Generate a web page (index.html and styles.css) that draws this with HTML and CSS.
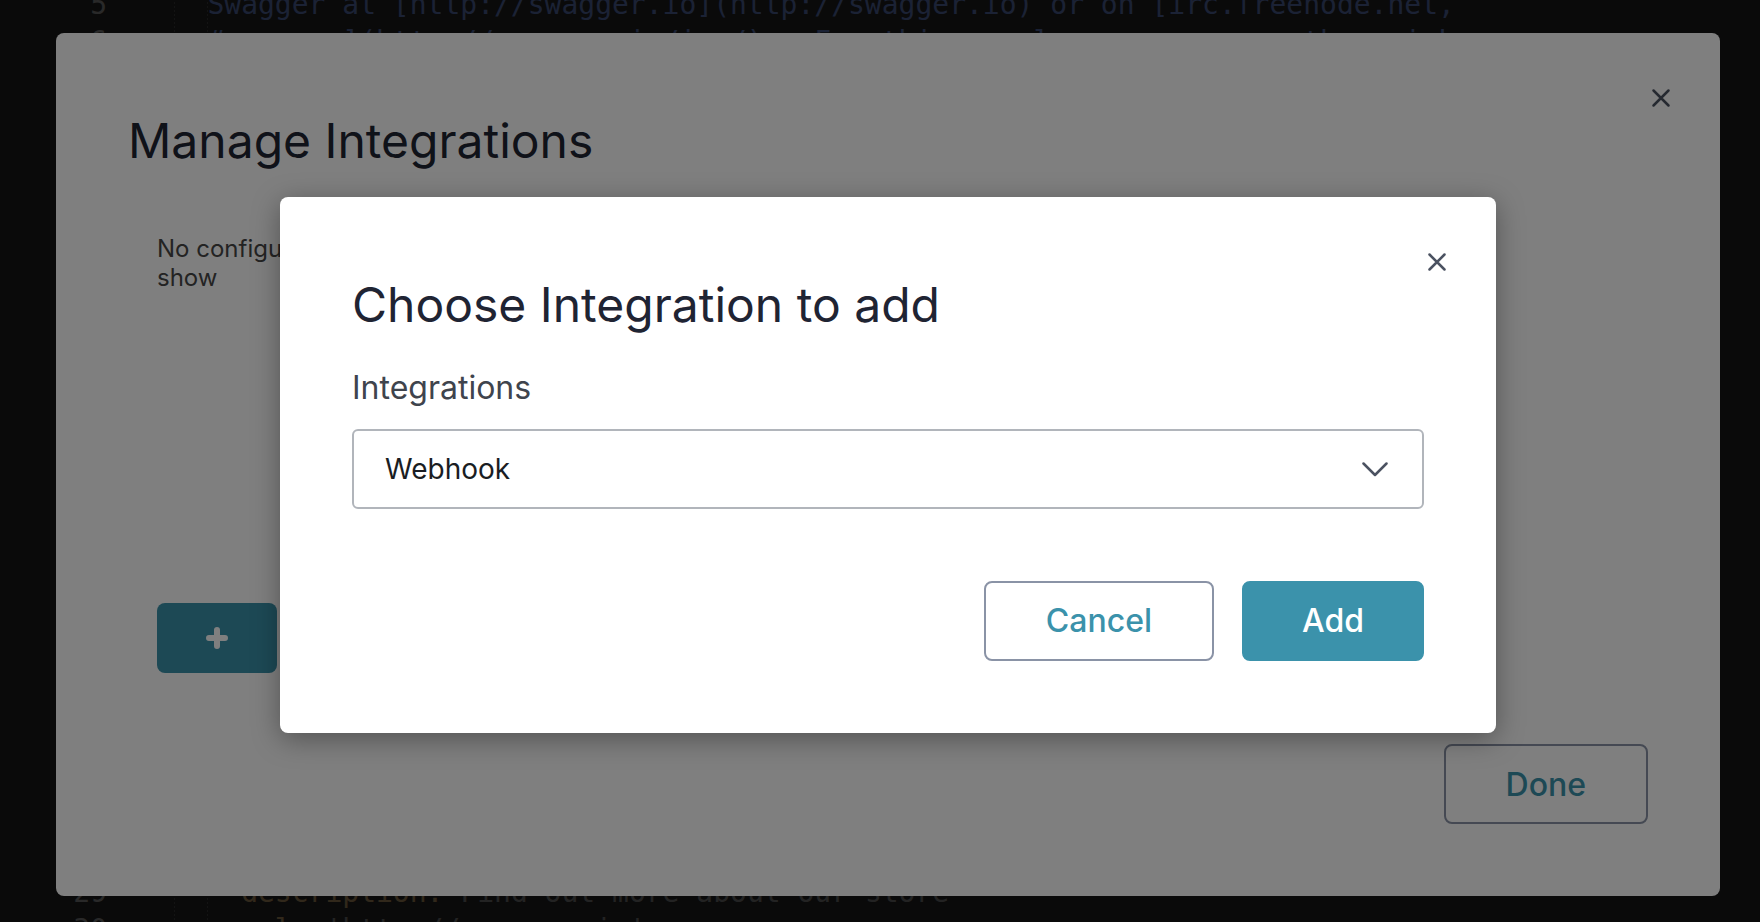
FILE: index.html
```html
<!DOCTYPE html>
<html>
<head>
<meta charset="utf-8">
<title>Manage Integrations</title>
<link rel="stylesheet" href="styles.css">
</head>
<body>

<!-- yaml editor underneath the dialogs -->
<div class="editor">
  <div class="gutter">
    <div>5</div><div>6</div><div>7</div><div>8</div><div>9</div><div>10</div>
    <div>11</div><div>12</div><div>13</div><div>14</div><div>15</div><div>16</div>
    <div>17</div><div>18</div><div>19</div><div>20</div><div>21</div><div>22</div>
    <div>23</div><div>24</div><div>25</div><div>26</div><div>27</div><div>28</div>
    <div>29</div><div>30</div>
  </div>
  <div class="code">
    <div class="line"><span class="str">    Swagger at [http://swagger.io](http://swagger.io) or on [irc.freenode.net,</span></div>
    <div class="line"><span class="str">    #swagger](http://swagger.io/irc/).  For this sample, you can use the api key</span></div>
    <div class="line"><span class="str">    `special-key` to test the authorization filters.</span></div>
    <div class="line">  <span class="key">version:</span> <span class="val">1.0.0</span></div>
    <div class="line">  <span class="key">title:</span> <span class="val">Swagger Petstore</span></div>
    <div class="line">  <span class="key">termsOfService:</span> <span class="val">'http://swagger.io/terms/'</span></div>
    <div class="line">  <span class="key">contact:</span></div>
    <div class="line">    <span class="key">email:</span> <span class="val">apiteam@swagger.io</span></div>
    <div class="line">  <span class="key">license:</span></div>
    <div class="line">    <span class="key">name:</span> <span class="val">Apache 2.0</span></div>
    <div class="line">    <span class="key">url:</span> <span class="val">'http://www.apache.org/licenses/LICENSE-2.0.html'</span></div>
    <div class="line"><span class="key">host:</span> <span class="val">petstore.swagger.io</span></div>
    <div class="line"><span class="key">basePath:</span> <span class="val">/v2</span></div>
    <div class="line"><span class="key">tags:</span></div>
    <div class="line">  - <span class="key">name:</span> <span class="val">pet</span></div>
    <div class="line">    <span class="key">description:</span> <span class="val">Everything about your Pets</span></div>
    <div class="line">    <span class="key">externalDocs:</span></div>
    <div class="line">      <span class="key">description:</span> <span class="val">Find out more</span></div>
    <div class="line">      <span class="key">url:</span> <span class="val">'http://swagger.io'</span></div>
    <div class="line">  - <span class="key">name:</span> <span class="val">store</span></div>
    <div class="line">    <span class="key">description:</span> <span class="val">Access to Petstore orders</span></div>
    <div class="line">  - <span class="key">name:</span> <span class="val">user</span></div>
    <div class="line">    <span class="key">description:</span> <span class="val">Operations about user</span></div>
    <div class="line">    <span class="key">externalDocs:</span></div>
    <div class="line">      <span class="key">description:</span> <span class="val">Find out more about our store</span></div>
    <div class="line">      <span class="key">url:</span> <span class="val">'http://swagger.io'</span></div>
  </div>
</div>

<!-- first dialog: list of integrations -->
<div class="backdrop">
  <div class="modal modal-main">
    <button class="close" type="button">
      <svg width="24" height="24" viewBox="0 0 24 24"><path d="M4.5 4.5l15 15M19.5 4.5l-15 15"/></svg>
    </button>
    <h2 class="modal-title">Manage Integrations</h2>
    <div class="integration-list">
      <p class="empty">No configured integrations to show</p>
      <button class="btn-new" type="button">
        <svg width="22" height="22" viewBox="0 0 22 22"><path d="M3 11h16M11 3v16"/></svg>
      </button>
    </div>
    <div class="modal-footer">
      <button class="btn btn-outline" type="button">Done</button>
    </div>
  </div>
</div>

<!-- second dialog: pick integration type -->
<div class="backdrop">
  <div class="modal modal-dialog">
    <button class="close" type="button">
      <svg width="24" height="24" viewBox="0 0 24 24"><path d="M4.5 4.5l15 15M19.5 4.5l-15 15"/></svg>
    </button>
    <h2 class="modal-title">Choose Integration to add</h2>
    <label class="field-label">Integrations</label>
    <div class="select">
      <span>Webhook</span>
      <svg width="26" height="16" viewBox="0 0 26 16"><polyline points="1.5,2.5 13,14 24.5,2.5"/></svg>
    </div>
    <div class="modal-footer actions">
      <button class="btn btn-outline" type="button">Cancel</button>
      <button class="btn btn-primary" type="button">Add</button>
    </div>
  </div>
</div>

</body>
</html>
```

FILE: styles.css
```css
* { box-sizing: border-box; }

body {
  margin: 0;
  height: 922px;
  overflow: hidden;
  background: #292929;
  font-family: Inter, "Noto Sans", sans-serif;
}

/* editor */

.editor {
  display: flex;
  margin-top: -14px;
  font-family: "DejaVu Sans Mono", "Liberation Mono", monospace;
  font-size: 28px;
  line-height: 37px;
}

.gutter {
  width: 107px;
  text-align: right;
  color: #a4a4a4;
}

.code {
  flex: 1;
  margin-left: 33px;
  color: #c8c8c8;
  /* dotted indent guides */
  background-image:
    linear-gradient(#4c4c4c 50%, transparent 50%),
    linear-gradient(#4c4c4c 50%, transparent 50%);
  background-size: 1px 4px, 1px 4px;
  background-position: 34px 0, 67px 0;
  background-repeat: repeat-y;
}

.line {
  height: 37px;
  white-space: pre;
}

.str { color: #6d8ad4; }
.key { color: #c4a06c; }
.val { color: #8e8e8e; }

/* dialogs */

.backdrop {
  position: fixed;
  top: 0; left: 0; right: 0; bottom: 0;
  display: flex;
  align-items: center;
  justify-content: center;
  padding: 7px 0 0 16px;
  background: rgba(0, 0, 0, 0.5);
}

.modal {
  position: relative;
  background: #fff;
  border-radius: 8px;
  padding: 72px;
}

.modal-main {
  width: 1664px;
  height: 863px;
  display: flex;
  flex-direction: column;
}

.modal-dialog {
  width: 1216px;
  box-shadow: 0 6px 28px rgba(0, 0, 0, 0.35);
}

.modal-title {
  margin: 0;
  font-size: 48px;
  line-height: 72px;
  font-weight: 400;
  color: #1f2433;
}

.close {
  position: absolute;
  top: 53px;
  right: 47px;
  width: 24px;
  height: 24px;
  padding: 0;
  border: 0;
  background: none;
}

.close svg { display: block; fill: none; stroke: #4b5261; stroke-width: 2.5; stroke-linecap: round; }

.integration-list { padding-left: 29px; }

.empty {
  width: 360px;
  margin: 57px 0 0;
  font-size: 24px;
  line-height: 29px;
  color: #474747;
}

.btn-new {
  display: flex;
  align-items: center;
  justify-content: center;
  width: 120px;
  height: 70px;
  margin-top: 311px;
  border: 0;
  border-radius: 8px;
  background: #3b92ab;
}

.btn-new svg { fill: none; stroke: #fff; stroke-width: 6; stroke-linecap: round; }

.modal-footer {
  margin-top: auto;
  display: flex;
  justify-content: flex-end;
  gap: 28px;
}

.actions { margin-top: 72px; }

.btn {
  height: 80px;
  padding: 0 60px;
  border: 2px solid #8a93a6;
  border-radius: 8px;
  font-family: Inter, sans-serif;
  font-size: 32px;
  font-weight: 500;
}

.btn-outline { background: #fff; color: #3b92ab; }
.btn-primary { padding: 0 58px; background: #3b92ab; border-color: #3b92ab; color: #fff; }

.field-label {
  display: block;
  margin: 28px 0 23px;
  font-size: 32px;
  line-height: 37px;
  color: #3f444d;
}

.select {
  display: flex;
  align-items: center;
  justify-content: space-between;
  height: 80px;
  padding: 0 34px 0 31px;
  border: 2px solid #b1b5bb;
  border-radius: 6px;
  font-size: 28px;
  color: #1a1d23;
}

.select svg { fill: none; stroke: #4b5261; stroke-width: 2.5; stroke-linecap: round; stroke-linejoin: round; }
```
